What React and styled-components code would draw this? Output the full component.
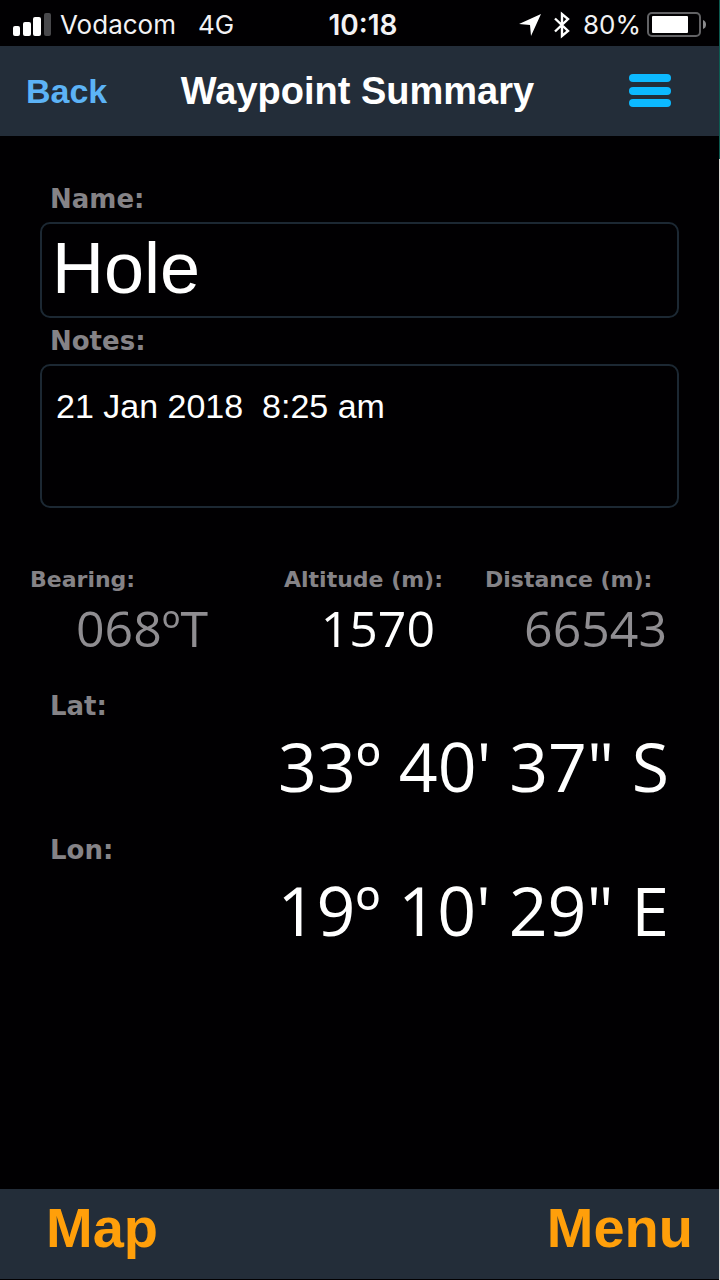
import React from "react";
import styled, { createGlobalStyle } from "styled-components";

const App = () => {
  return (
    <>
      <GlobalStyle />
      <Screen>
        <StatusBar>
          <StatusGroup>
            <svg width="39" height="24" viewBox="0 0 39 24" aria-hidden="true">
              <rect x="0" y="13" width="7" height="10" rx="2" fill="#fff" />
              <rect x="10" y="9" width="8" height="14" rx="2" fill="#fff" />
              <rect x="20" y="4" width="8" height="19" rx="2" fill="#fff" />
              <rect x="31" y="0" width="7" height="23" rx="2" fill="#48484b" />
            </svg>
            <Carrier>Vodacom</Carrier>
            <span>4G</span>
          </StatusGroup>
          <Clock>10:18</Clock>
          <StatusGroup $end>
            <svg width="24" height="24" viewBox="0 0 24 24" aria-hidden="true">
              <path d="M23 1 L1 11 L12 12 L13 23 Z" fill="#fff" />
            </svg>
            <Bluetooth width="18" height="28" viewBox="0 0 18 28" aria-hidden="true">
              <path
                d="M2 7.5 L15 20 L9 25 V3 L15 8 L2 20.5"
                fill="none"
                stroke="#fff"
                strokeWidth="2.4"
              />
            </Bluetooth>
            <Percent>80%</Percent>
            <svg width="60" height="26" viewBox="0 0 60 26" aria-hidden="true">
              <rect x="1" y="1" width="52" height="23" rx="4" fill="none" stroke="#626265" strokeWidth="2" />
              <rect x="5" y="4" width="36" height="17" rx="1" fill="#fff" />
              <path d="M56 8 Q59 9 59 12.5 Q59 16 56 17 Z" fill="#8a8a8d" />
            </svg>
          </StatusGroup>
        </StatusBar>

        <Header>
          <BackButton type="button">Back</BackButton>
          <Title>Waypoint Summary</Title>
          <MenuButton type="button" aria-label="Open menu">
            <svg width="42" height="34" viewBox="0 0 42 34" aria-hidden="true">
              <rect width="42" height="8" rx="4" fill="#0cb9ff" />
              <rect y="13" width="42" height="8" rx="4" fill="#0cb9ff" />
              <rect y="25" width="42" height="8" rx="4" fill="#0cb9ff" />
            </svg>
          </MenuButton>
        </Header>

        <Content>
          <Form>
            <Label htmlFor="name">Name:</Label>
            <NameInput id="name" type="text" defaultValue="Hole" />
            <Label htmlFor="notes">Notes:</Label>
            <NotesInput id="notes" defaultValue="21 Jan 2018  8:25 am" />
          </Form>

          <Stats>
            <Stat $gap={76}>
              <StatLabel>Bearing:</StatLabel>
              <StatValue $muted>068ºT</StatValue>
            </Stat>
            <Stat $gap={50}>
              <StatLabel>Altitude (m):</StatLabel>
              <StatValue>1570</StatValue>
            </Stat>
            <Stat>
              <StatLabel>Distance (m):</StatLabel>
              <StatValue $muted>66543</StatValue>
            </Stat>
          </Stats>

          <Position>
            <CoordLabel>Lat:</CoordLabel>
            <Coord>33º 40' 37" S</Coord>
            <CoordLabel>Lon:</CoordLabel>
            <Coord>19º 10' 29" E</Coord>
          </Position>
        </Content>

        <Footer>
          <FooterButton type="button">Map</FooterButton>
          <FooterButton type="button">Menu</FooterButton>
        </Footer>
      </Screen>
    </>
  );
};

const GlobalStyle = createGlobalStyle`
  * {
    box-sizing: border-box;
  }

  body {
    margin: 0;
    background: #010002;
  }

  button {
    padding: 0;
    border: none;
    background: none;
    cursor: pointer;
    font-family: inherit;
  }
`;

const Screen = styled.div`
  display: flex;
  flex-direction: column;
  min-height: 100vh;
  padding-bottom: 1px;
  border: solid transparent;
  border-width: 0 1px 0 0;
  border-image: linear-gradient(#0c5a50 160px, #dedad6 160px) 1;
  background: #010002;
  color: #fff;
  font-family: "Liberation Sans", Arial, sans-serif;
`;

const StatusBar = styled.div`
  display: grid;
  grid-template-columns: 1fr auto 1fr;
  align-items: center;
  height: 46px;
  padding: 4px 12px 0 13px;
  font-family: Inter, Roboto, sans-serif;
  font-size: 26px;
  line-height: 32px;
  color: #f2f2f4;
`;

const StatusGroup = styled.div`
  display: flex;
  align-items: center;
  justify-content: ${({ $end }) => ($end ? "flex-end" : "flex-start")};
`;

const Carrier = styled.span`
  margin: 0 22px 0 8px;
`;

const Clock = styled.time`
  margin-left: 6px;
  font-size: 28px;
  font-weight: 600;
`;

const Bluetooth = styled.svg`
  margin: 0 12px 0 11px;
`;

const Percent = styled.span`
  margin-right: 6px;
`;

const Header = styled.header`
  display: grid;
  grid-template-columns: 1fr auto 1fr;
  align-items: center;
  height: 90px;
  padding: 0 30px 0 26px;
  background: #232d39;
`;

const BackButton = styled.button`
  justify-self: start;
  color: #5cb3f6;
  font-size: 34px;
  font-weight: bold;
`;

const Title = styled.h1`
  margin: 0;
  font-size: 38px;
  font-weight: bold;
  line-height: 44px;
`;

const MenuButton = styled.button`
  display: flex;
  justify-self: end;
  margin-right: 18px;
`;

const Content = styled.main`
  flex: 1;
  padding-top: 40px;
`;

const Form = styled.form`
  display: flex;
  flex-direction: column;
  padding: 0 40px;
`;

const Label = styled.label`
  padding: 0 10px;
  color: #858387;
  font-family: "DejaVu Sans", Verdana, sans-serif;
  font-size: 26px;
  font-weight: bold;
  line-height: 46px;
`;

const NameInput = styled.input`
  width: 100%;
  height: 96px;
  padding: 0 10px 4px;
  border: 2px solid #1c2833;
  border-radius: 10px;
  background: transparent;
  color: #fff;
  font-family: inherit;
  font-size: 72px;
`;

const NotesInput = styled.textarea`
  width: 100%;
  height: 144px;
  padding: 20px 14px;
  border: 2px solid #1c2833;
  border-radius: 10px;
  background: transparent;
  color: #fff;
  font-family: inherit;
  font-size: 34px;
  line-height: 40px;
  resize: none;
`;

const Stats = styled.dl`
  display: grid;
  grid-template-columns: 254fr 201fr 182fr;
  margin: 58px 0 0;
  padding: 0 52px 0 30px;
`;

const Stat = styled.div`
  min-width: 0;
  padding-right: ${({ $gap }) => $gap || 0}px;
`;

const StatLabel = styled.dt`
  color: #858387;
  font-family: "DejaVu Sans", Verdana, sans-serif;
  font-size: 22px;
  font-weight: bold;
  line-height: 28px;
  white-space: nowrap;
`;

const StatValue = styled.dd`
  margin: 0;
  color: ${({ $muted }) => ($muted ? "#8f8d91" : "#fff")};
  font-family: "Open Sans", "Noto Sans", sans-serif;
  font-size: 50px;
  font-weight: 500;
  line-height: 68px;
  text-align: right;
`;

const Position = styled.dl`
  margin: 28px 50px 0;
`;

const CoordLabel = styled.dt`
  color: #858387;
  font-family: "DejaVu Sans", Verdana, sans-serif;
  font-size: 26px;
  font-weight: bold;
  line-height: 32px;
`;

const Coord = styled.dd`
  margin: 0 0 24px;
  font-family: "Open Sans", "Noto Sans", sans-serif;
  font-size: 68px;
  font-weight: 500;
  line-height: 88px;
  text-align: right;
  white-space: nowrap;
`;

const Footer = styled.footer`
  display: flex;
  justify-content: space-between;
  align-items: center;
  height: 90px;
  padding: 0 26px 12px 46px;
  background: #232d39;
`;

const FooterButton = styled.button`
  color: #ff9f0a;
  font-size: 56px;
  font-weight: bold;
  line-height: 64px;
`;

export default App;
